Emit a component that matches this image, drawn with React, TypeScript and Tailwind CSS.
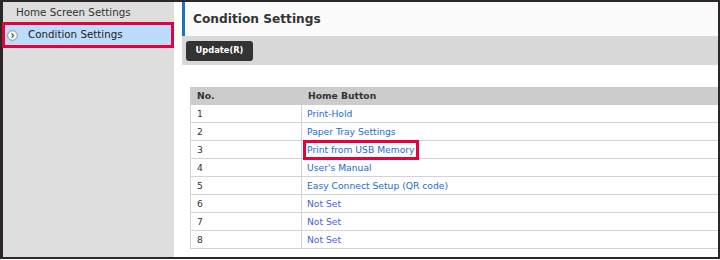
import React from 'react';

const rows = [
  { no: 1, label: 'Print-Hold' },
  { no: 2, label: 'Paper Tray Settings' },
  { no: 3, label: 'Print from USB Memory', marked: true },
  { no: 4, label: "User's Manual" },
  { no: 5, label: 'Easy Connect Setup (QR code)' },
  { no: 6, label: 'Not Set', unset: true },
  { no: 7, label: 'Not Set', unset: true },
  { no: 8, label: 'Not Set', unset: true },
];

function ChevronCircle() {
  return (
    <svg width="11" height="11" viewBox="0 0 11 11" className="shrink-0">
      <circle cx="5.5" cy="5.5" r="4.8" fill="#ffffff" stroke="#8a8a8a" strokeWidth="1" />
      <path d="M4.5 3.4 L6.6 5.5 L4.5 7.6" fill="none" stroke="#555" strokeWidth="1.3" />
    </svg>
  );
}

export default function App() {
  return (
    <div className="w-[720px] h-[260px] bg-white font-['DejaVu_Sans',sans-serif]">
      <div className="h-[259px] border-2 border-l-[3px] border-[#2d2727] flex">
        {/* Sidebar */}
        <div className="w-[171px] bg-[#dedede] flex flex-col pt-[1px]">
          <div className="h-[19px] flex items-center pl-[13px] text-[10.3px] text-[#333]">
            Home Screen Settings
          </div>
          <div className="-ml-[1px] h-[26px] border-[3px] border-[#e6003c] bg-[#bcdcfb] flex items-center pl-[2px] gap-[10px] text-[10.3px] text-[#222]">
            <ChevronCircle />
            Condition Settings
          </div>
        </div>

        {/* Main */}
        <div className="flex-1 flex flex-col pl-[8px] min-w-0">
          <div className="h-[34px] bg-[#fbfbfb] border-l-[3px] border-[#1f72bf] flex items-center pl-[8px]">
            <span className="text-[12.2px] font-bold text-[#333]">Condition Settings</span>
          </div>
          <div className="h-[29px] bg-[#d8d8d8] flex items-center pl-[4px]">
            <button className="h-[20px] w-[67px] rounded-[3px] bg-[#333333] text-white text-[8.3px] font-bold">
              Update(R)
            </button>
          </div>

          <div className="mt-[22px] ml-[8px] border-l border-[#d3d3d3]">
            <div className="h-[18px] bg-[#cccccc] flex items-center text-[9.2px] font-bold text-[#333]">
              <div className="w-[111px] pl-[6px]">No.</div>
              <div className="pl-[6px]">Home Button</div>
            </div>
            {rows.map((r) => (
              <div key={r.no} className="h-[18px] flex border-b border-[#d3d3d3] text-[9.2px]">
                <div className="w-[111px] pl-[6px] flex items-center text-[#333] border-r border-[#d3d3d3]">
                  {r.no}
                </div>
                <div className="flex items-center pl-[5px]">
                  <span
                    className={
                      r.marked
                        ? 'border-[3px] border-[#e6003c] px-[1px] -ml-[4px] h-[20px] flex items-center text-[#1b6ad4]'
                        : r.unset
                        ? 'text-[#4b62d6]'
                        : 'text-[#1b6ad4]'
                    }
                  >
                    {r.label}
                  </span>
                </div>
              </div>
            ))}
          </div>
        </div>
      </div>
    </div>
  );
}
